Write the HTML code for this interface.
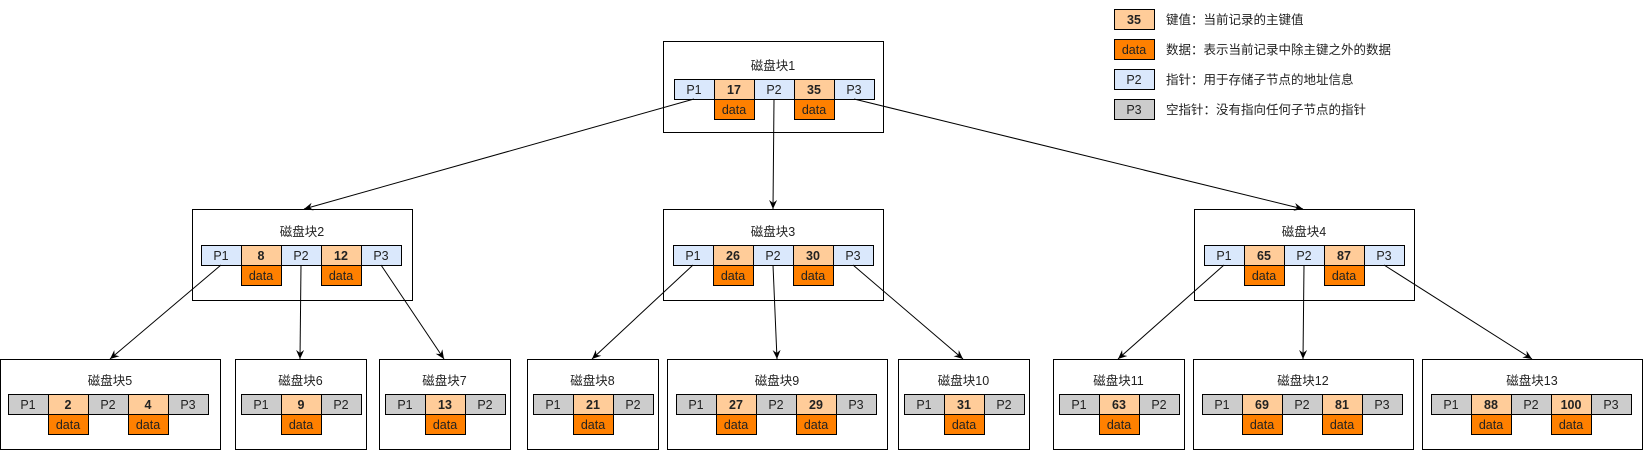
<!DOCTYPE html>
<html><head><meta charset="utf-8"><style>
html,body{margin:0;padding:0;background:#fff;width:1645px;height:450px;overflow:hidden}
text{font-family:"Liberation Sans","Noto Sans CJK SC",sans-serif;font-size:12.5px;fill:#222}
</style></head><body>
<svg width="1645" height="450" xmlns="http://www.w3.org/2000/svg" id="s">
<defs><marker id="a" markerWidth="10" markerHeight="10" refX="9" refY="5" orient="auto" markerUnits="userSpaceOnUse"><path d="M0,1 L9,5 L0,9 L3,5 Z" fill="#000"/></marker></defs>
<g id="g"></g>
</svg>
<script>
var g=document.getElementById('g'),h='';
var LB='#dae8fc',KY='#ffcc99',DT='#ff8000',GR='#cccccc';
function rect(x,y,w,ht,f){h+='<rect x="'+(x+.5)+'" y="'+(y+.5)+'" width="'+w+'" height="'+ht+'" fill="'+f+'" stroke="#000" stroke-width="1"/>';}
function txt(x,y,t,b,anchor){h+='<text x="'+x+'" y="'+y+'" text-anchor="'+(anchor||'middle')+'"'+(b?' font-weight="bold"':'')+'>'+t+'</text>';}
function block(bx,by,bw,bh,label,cx,cy,keys,pc){
 rect(bx,by,bw,bh,'#fff');
 txt(bx+bw/2,cy-9,label);
 var n=keys.length*2+1;
 for(var i=0;i<n;i++){var x=cx+i*40;
  if(i%2==0){rect(x,cy,40,20,pc);txt(x+20,cy+15,'P'+(i/2+1));}
  else{rect(x,cy,40,20,KY);txt(x+20,cy+15,keys[(i-1)/2],1);rect(x,cy+20,40,20,DT);txt(x+20,cy+35,'data');}
 }
}
function line(x1,y1,x2,y2){h+='<line x1="'+x1+'" y1="'+y1+'" x2="'+x2+'" y2="'+y2+'" stroke="#000" stroke-width="1" marker-end="url(#a)"/>';}
block(663,41,220,91,'磁盘块1',674,79,[17,35],LB);
block(192,209,220,91,'磁盘块2',201,245,[8,12],LB);
block(663,209,220,91,'磁盘块3',673,245,[26,30],LB);
block(1194,209,220,91,'磁盘块4',1204,245,[65,87],LB);
var L=[[0,220,8,[2,4]],[235,131,241,[9]],[379,131,385,[13]],[527,131,533,[21]],[667,220,676,[27,29]],[898,131,904,[31]],[1053,131,1059,[63]],[1193,220,1202,[69,81]],[1422,220,1431,[88,100]]];
var names=['5','6','7','8','9','10','11','12','13'];
for(var i=0;i<L.length;i++){var b=L[i];block(b[0],359,b[1],90,'磁盘块'+names[i],b[2],394,b[3],GR);}
line(694,99,304,209);line(774,99,773,209);line(854,99,1303,209);
line(221,265,110,359);line(301,265,300,359);line(381,265,444,359);
line(693,265,592,359);line(773,265,777,359);line(853,265,963,359);
line(1224,265,1118,359);line(1304,265,1303,359);line(1384,265,1532,359);
// legend
var lg=[[KY,'35',1,'键值：当前记录的主键值'],[DT,'data',0,'数据：表示当前记录中除主键之外的数据'],[LB,'P2',0,'指针：用于存储子节点的地址信息'],[GR,'P3',0,'空指针：没有指向任何子节点的指针']];
for(var i=0;i<4;i++){var y=9+i*30;rect(1114,y,40,20,lg[i][0]);txt(1134,y+15,lg[i][1],lg[i][2]);txt(1166,y+15,lg[i][3],0,'start');}
g.innerHTML=h;
</script>
</body></html>
